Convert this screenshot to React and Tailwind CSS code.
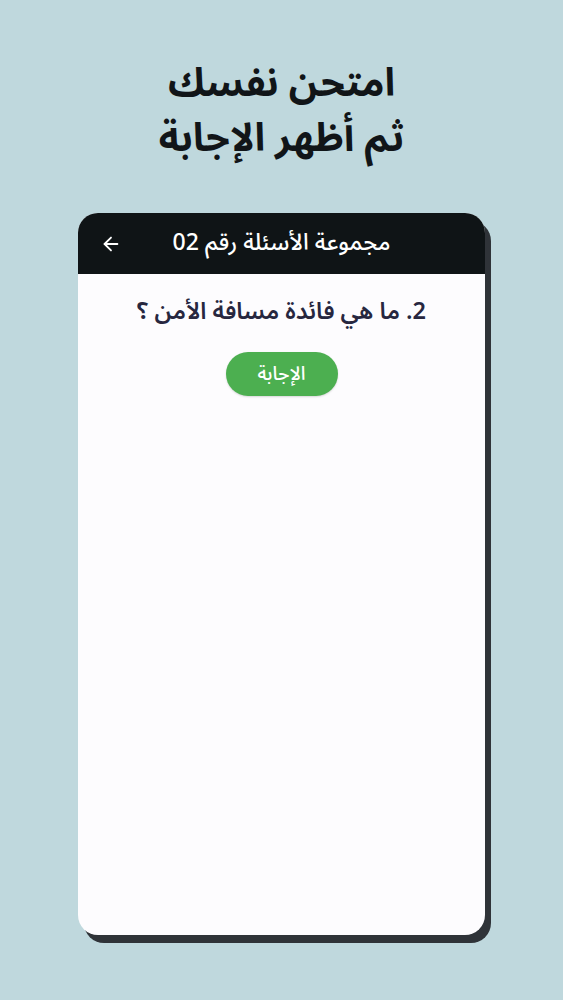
import React from 'react'
import { ArrowLeft } from 'lucide-react'

const App = () => {
    return (
        <div
            dir="rtl"
            className="w-[563px] h-[1000px] bg-[#bfd8dd] flex flex-col items-center overflow-hidden"
            style={{ fontFamily: '"Noto Sans Arabic", "Noto Sans", "DejaVu Sans", sans-serif' }}
        >
            {/* Heading */}
            <h1 className="pt-[56px] text-center text-[39px] leading-[55px] font-bold text-[#111518]">
                <span className="block">امتحن نفسك</span>
                <span className="block">ثم أظهر الإجابة</span>
            </h1>

            {/* Phone card */}
            <div className="mt-[47px] w-[407px] h-[722px] bg-[#fdfcfe] rounded-[20px] shadow-[6px_8px_0_#2f3338] overflow-hidden flex flex-col">
                <div className="h-[61px] bg-[#0f1416] flex items-center px-[22px]">
                    <div className="w-[22px]" />
                    <div className="flex-1 text-center text-white text-[23px] font-medium">
                        مجموعة الأسئلة رقم 02
                    </div>
                    <ArrowLeft className="text-white" size={22} strokeWidth={2} />
                </div>

                <div className="flex flex-col items-center">
                    <p className="mt-[20px] text-[23.5px] font-semibold text-[#27273f]">
                        2. ما هي فائدة مسافة الأمن ؟
                    </p>
                    <button className="mt-[23px] w-[112px] h-[44px] rounded-full bg-[#4caf50] text-white text-[19px] font-medium shadow-[0_1px_2px_rgba(0,0,0,0.15)]">
                        الإجابة
                    </button>
                </div>
            </div>
        </div>
    )
}

export default App
